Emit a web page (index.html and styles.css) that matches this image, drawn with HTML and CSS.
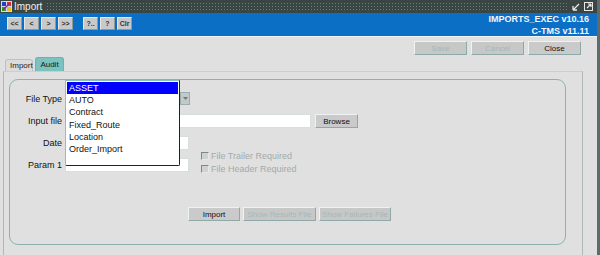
FILE: index.html
```html
<!DOCTYPE html>
<html>
<head>
<meta charset="utf-8">
<link rel="stylesheet" href="styles.css">
</head>
<body>
<div class="window">
  <div class="titlebar">
    <svg class="appicon" width="11" height="11" viewBox="0 0 11 11">
      <rect x="0" y="0" width="11" height="11" fill="#d8d8e8"/>
      <rect x="1" y="1" width="4" height="4" fill="#2040c0"/>
      <rect x="6" y="1" width="4" height="4" fill="#e03030"/>
      <rect x="1" y="6" width="4" height="4" fill="#30a030"/>
      <rect x="6" y="6" width="4" height="4" fill="#e0c020"/>
      <path d="M2 9 L9 2" stroke="#803090" stroke-width="1.5"/>
    </svg>
    <span class="title">Import</span>
    <div class="dots"></div>
    <div class="winbtns">
      <svg width="9" height="9" viewBox="0 0 9 9"><path d="M1 8 L7 2 M1 8 H5 M1 8 V4" stroke="#e8e8e8" stroke-width="1.3" fill="none"/></svg>
      <svg width="9" height="9" viewBox="0 0 9 9"><rect x="0.5" y="0.5" width="8" height="8" fill="none" stroke="#e8e8e8"/><path d="M3 6 L7 2 M7 2 H4 M7 2 V5" stroke="#e8e8e8" stroke-width="1.2" fill="none"/></svg>
    </div>
  </div>
  <div class="toolbar">
    <div class="navbtns">
      <button class="tb">&lt;&lt;</button>
      <button class="tb">&lt;</button>
      <button class="tb">&gt;</button>
      <button class="tb">&gt;&gt;</button>
      <span class="tbgap"></span>
      <button class="tb">?..</button>
      <button class="tb">?</button>
      <button class="tb">Clr</button>
    </div>
    <div class="version">
      <div>IMPORTS_EXEC v10.16</div>
      <div>C-TMS v11.11</div>
    </div>
  </div>
  <div class="content">
    <div class="actions">
      <button class="btn disabled">Save</button>
      <button class="btn disabled">Cancel</button>
      <button class="btn">Close</button>
    </div>
    <div class="tabs">
      <div class="tab active">Import</div>
      <div class="tab teal">Audit</div>
    </div>
    <div class="tabpanel">
      <div class="group">
        <div class="row">
          <label class="lbl">File Type</label>
          <div class="combo">
            <div class="field combofield"></div>
            <div class="arrow"><svg width="5" height="3" viewBox="0 0 5 3"><path d="M0 0 H5 L2.5 3 Z" fill="#707878"/></svg></div>
          </div>
        </div>
        <div class="row">
          <label class="lbl">Input file</label>
          <div class="field wide"></div>
          <button class="btn browse">Browse</button>
        </div>
        <div class="split">
          <div class="rows">
            <div class="row">
              <label class="lbl">Date</label>
              <div class="field short"></div>
            </div>
            <div class="row">
              <label class="lbl">Param 1</label>
              <div class="field short"></div>
            </div>
          </div>
          <div class="checks">
            <div class="check"><span class="box"></span>File Trailer Required</div>
            <div class="check"><span class="box"></span>File Header Required</div>
          </div>
        </div>
        <div class="bottom">
          <button class="btn imp">Import</button>
          <button class="btn disabled results">Show Results File</button>
          <button class="btn disabled failures">Show Failures File</button>
        </div>
        <ul class="dropdown">
          <li class="sel">ASSET</li>
          <li>AUTO</li>
          <li>Contract</li>
          <li>Fixed_Route</li>
          <li>Location</li>
          <li>Order_Import</li>
        </ul>
      </div>
    </div>
  </div>
</div>
</body>
</html>
```

FILE: styles.css
```css
* { box-sizing: border-box; }
html, body {
  margin: 0;
  padding: 0;
  width: 600px;
  height: 255px;
  overflow: hidden;
  background: #e0e0e0;
  font-family: "Liberation Sans", Arial, sans-serif;
  font-size: 9px;
  color: #000;
}
button { font-family: inherit; margin: 0; padding: 0; }
.window {
  width: 600px;
  height: 255px;
  border-right: 3px solid #5d6b6b;
  display: flex;
  flex-direction: column;
}
.titlebar {
  height: 13px;
  background: #3a4644;
  display: flex;
  align-items: center;
  padding-left: 1px;
  color: #f0f0f0;
}
.appicon { flex: none; margin-right: 2px; }
.title { font-size: 10px; line-height: 13px; margin-right: 4px; }
.dots {
  flex: 1;
  height: 9px;
  background-color: #3a4644;
  background-image: radial-gradient(circle, #6f7f7d 0.8px, transparent 1px);
  background-size: 3px 3px;
}
.winbtns {
  display: flex;
  gap: 3px;
  padding: 0 4px 0 4px;
}
.toolbar {
  height: 24px;
  background: #0b6fc5;
  display: flex;
  justify-content: space-between;
  align-items: flex-start;
  border-bottom: 1px solid #f4f4f4;
}
.navbtns {
  display: flex;
  gap: 2px;
  padding: 4px 0 0 7px;
}
.tb {
  width: 15px;
  height: 13px;
  background: #c9c9c9;
  border: 1px solid;
  border-color: #e6e6e6 #8e9a9a #8e9a9a #e6e6e6;
  font-size: 7px;
  font-weight: bold;
  color: #333;
  line-height: 11px;
}
.tbgap { width: 6px; }
.version {
  color: #f2f6ff;
  font-weight: bold;
  font-size: 9px;
  text-align: right;
  line-height: 12px;
  padding: 0 8px 0 0;
}
.content {
  flex: 1;
  display: flex;
  flex-direction: column;
  padding: 4px 14px 0 3px;
}
.actions {
  display: flex;
  justify-content: flex-end;
  gap: 4px;
  height: 14px;
  padding-right: 2px;
}
.btn {
  height: 14px;
  background: #cacaca;
  border: 1px solid;
  border-color: #eef2f2 #8fa8a8 #8fa8a8 #eef2f2;
  font-size: 8px;
  color: #111;
}
.btn.disabled { color: #a6b6b8; background: #c6c8c8; }
.actions .btn { width: 53px; }
.tabs {
  display: flex;
  align-items: flex-end;
  gap: 2px;
  height: 14px;
  margin-top: 2px;
  padding-left: 2px;
}
.tab {
  height: 12px;
  padding: 0 4px;
  font-size: 8px;
  line-height: 11px;
  border: 1px solid #b8c4c4;
  border-bottom: none;
  border-radius: 3px 3px 0 0;
  background: #dcdcdc;
}
.tab.active { width: 28px; color: #222; }
.tab.teal { background: #7cc2c0; height: 14px; line-height: 13px; width: 29px; text-align: center; color: #102020; border-color: #70b0b0; }
.tabpanel {
  flex: 1;
  border: 1px solid #b0b8b8;
  border-bottom: none;
  border-top-color: #c8d0d0;
  padding: 7px 16px 0 5px;
  display: flex;
  flex-direction: column;
}
.group {
  position: relative;
  height: 166px;
  border: 1px solid #8fb0b0;
  border-radius: 9px;
  padding: 12px 0 0 0;
  display: flex;
  flex-direction: column;
  gap: 8px;
}
.row {
  display: flex;
  align-items: center;
  height: 14px;
}
.lbl {
  width: 55px;
  text-align: right;
  padding-right: 3px;
  font-size: 9px;
  color: #111;
}
.field {
  height: 14px;
  background: #fff;
  border: 1px solid #d6dede;
}
.combo { display: flex; }
.combofield { width: 115px; }
.arrow {
  width: 10px;
  height: 13px;
  background: #c4c8c8;
  border: 1px solid #98b0b0;
  display: flex;
  align-items: center;
  justify-content: center;
}
.wide { width: 246px; }
.browse { width: 43px; margin-left: 4px; font-size: 8px; }
.split { display: flex; }
.rows { display: flex; flex-direction: column; gap: 8px; }
.short { width: 124px; }
.checks {
  padding: 14px 0 0 12px;
  display: flex;
  flex-direction: column;
  gap: 2px;
}
.check {
  display: flex;
  align-items: center;
  height: 11px;
  color: #a2abab;
  font-size: 9px;
}
.box {
  width: 8px;
  height: 8px;
  border: 1px solid;
  border-color: #7f8888 #e8e8e8 #e8e8e8 #7f8888;
  background: #cfd2d2;
  margin-right: 2px;
}
.bottom {
  display: flex;
  justify-content: center;
  gap: 3px;
  margin-top: 25px;
  padding-left: 4px;
}
.imp { width: 52px; }
.results { width: 73px; }
.failures { width: 72px; }
.dropdown {
  position: absolute;
  left: 55px;
  top: 0px;
  width: 115px;
  height: 86px;
  margin: 0;
  padding: 1px;
  list-style: none;
  background: #fff;
  border: 1px solid #1c2424;
  border-top-color: #8fc0c0;
  border-left-color: #8fc0c0;
  border-radius: 0 0 2px 2px;
}
.dropdown li {
  height: 12.2px;
  line-height: 12px;
  padding-left: 2px;
  font-size: 9px;
  color: #111;
}
.dropdown li.sel { background: #0000ff; color: #fff; }
```
